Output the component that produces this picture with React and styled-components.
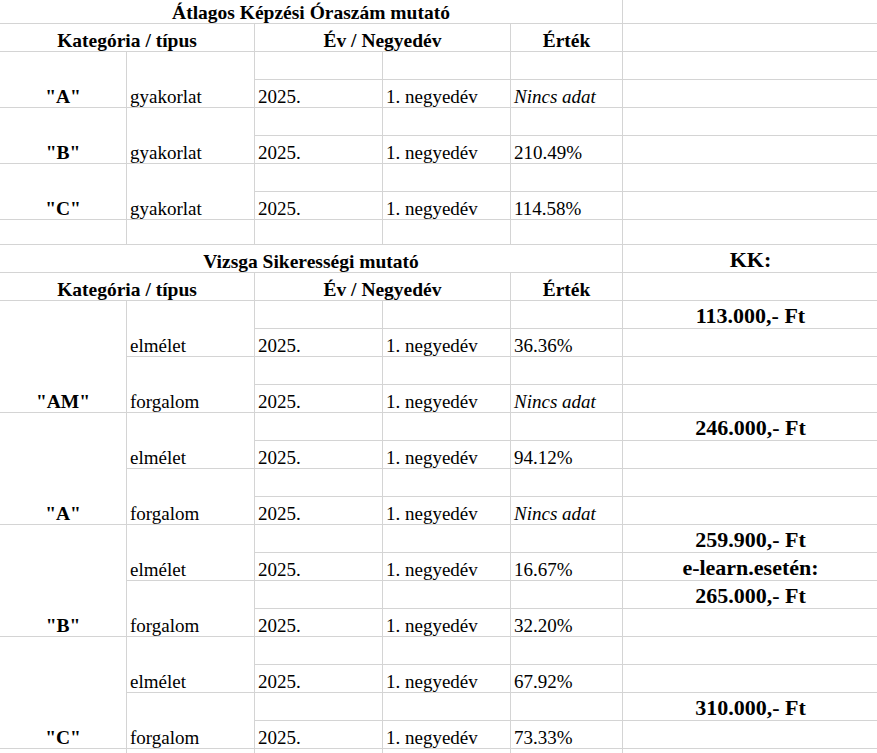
import React from "react";
import styled, { createGlobalStyle } from "styled-components";

const GlobalStyle = createGlobalStyle`
  html, body {
    margin: 0;
    padding: 0;
    background: #ffffff;
    overflow: hidden;
  }
  body {
    font-family: "Liberation Serif", "DejaVu Serif", serif;
    color: #000000;
  }
`;

const Sheet = styled.div`
  display: grid;
  grid-template-columns: 127px 128px 128px 128px 112px 256px;
  grid-template-rows: repeat(8, 28px) 25px repeat(19, 28px);
  width: 879px;
  margin-top: -4px;
  font-family: "Liberation Serif", "DejaVu Serif", serif;
  color: #000000;
`;

const Cell = styled.div`
  grid-column: span ${(p) => p.$cols || 1};
  grid-row: span ${(p) => p.$rows || 1};
  display: flex;
  align-items: flex-end;
  justify-content: flex-start;
  box-sizing: border-box;
  padding: 0 3px;
  border-right: 1px solid #d4d4d4;
  border-bottom: 1px solid #d4d4d4;
  font-family: "Liberation Serif", "DejaVu Serif", serif;
  font-size: 19px;
  line-height: 21px;
  white-space: nowrap;
`;

const TitleCell = styled(Cell)`
  justify-content: center;
  font-weight: 700;
  font-size: 19.5px;
`;

const HeadCell = styled(TitleCell)``;

const CategoryCell = styled(TitleCell)``;

const DataCell = styled(Cell)`
  font-style: ${(p) => (p.$missing ? "italic" : "normal")};
`;

const SideCell = styled(Cell)`
  justify-content: center;
  font-weight: 700;
  font-size: 22px;
  line-height: 24px;
`;

const YEAR = "2025.";
const QUARTER = "1. negyedév";
const MISSING = "Nincs adat";

const hours = [
  { cat: '"A"', type: "gyakorlat", value: null },
  { cat: '"B"', type: "gyakorlat", value: "210.49%" },
  { cat: '"C"', type: "gyakorlat", value: "114.58%" },
];

const exams = [
  { cat: '"AM"', items: [{ type: "elmélet", value: "36.36%" }, { type: "forgalom", value: null }] },
  { cat: '"A"', items: [{ type: "elmélet", value: "94.12%" }, { type: "forgalom", value: null }] },
  { cat: '"B"', items: [{ type: "elmélet", value: "16.67%" }, { type: "forgalom", value: "32.20%" }] },
  { cat: '"C"', items: [{ type: "elmélet", value: "67.92%" }, { type: "forgalom", value: "73.33%" }] },
];

// KK prices, keyed by row index inside the exam block
const prices = {
  0: "113.000,- Ft",
  4: "246.000,- Ft",
  8: "259.900,- Ft",
  9: "e-learn.esetén:",
  10: "265.000,- Ft",
  14: "310.000,- Ft",
};

const Header = () => (
  <>
    <HeadCell $cols={2}>Kategória / típus</HeadCell>
    <HeadCell $cols={2}>Év / Negyedév</HeadCell>
    <HeadCell>Érték</HeadCell>
  </>
);

const Values = ({ value }) => (
  <>
    <DataCell>{YEAR}</DataCell>
    <DataCell>{QUARTER}</DataCell>
    <DataCell $missing={!value}>{value || MISSING}</DataCell>
  </>
);

const Blank = ({ count }) =>
  Array.from({ length: count }, (_, i) => <Cell key={i} />);

const App = () => {
  return (
    <>
      <GlobalStyle />
      <Sheet>
        <TitleCell $cols={5}>Átlagos Képzési Óraszám mutató</TitleCell>
        <SideCell />
        <Header />
        <SideCell />
        {hours.map((row) => (
          <React.Fragment key={row.cat}>
            <CategoryCell $rows={2}>{row.cat}</CategoryCell>
            <DataCell $rows={2}>{row.type}</DataCell>
            <Blank count={3} />
            <SideCell />
            <Values value={row.value} />
            <SideCell />
          </React.Fragment>
        ))}
        <Blank count={6} />

        <TitleCell $cols={5}>Vizsga Sikerességi mutató</TitleCell>
        <SideCell>KK:</SideCell>
        <Header />
        <SideCell />
        {exams.map((group, gi) =>
          group.items.map((item, ii) => {
            const r = gi * 4 + ii * 2;
            return (
              <React.Fragment key={`${group.cat}-${item.type}`}>
                {ii === 0 && <CategoryCell $rows={4}>{group.cat}</CategoryCell>}
                <DataCell $rows={2}>{item.type}</DataCell>
                <Blank count={3} />
                <SideCell>{prices[r]}</SideCell>
                <Values value={item.value} />
                <SideCell>{prices[r + 1]}</SideCell>
              </React.Fragment>
            );
          })
        )}
        <Blank count={6} />
      </Sheet>
    </>
  );
};

export default App;
